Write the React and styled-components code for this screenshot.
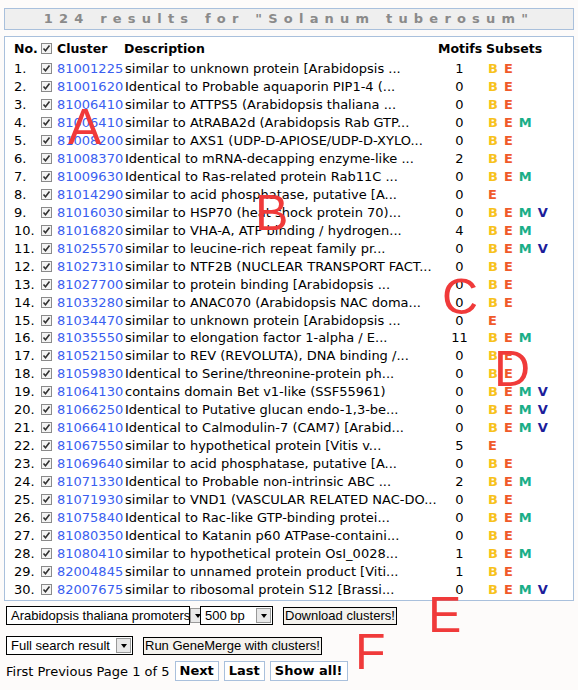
import React from "react";
import styled, { createGlobalStyle } from "styled-components";

const G = createGlobalStyle`
  body { margin: 0; background: #fdfbfa; font-family: "DejaVu Sans", Verdana, sans-serif; font-size: 13px; color: #000; }
`;
const Page = styled.div`position: relative; width: 578px; height: 690px; padding: 8px 4px 0; box-sizing: border-box;`;
const Title = styled.div`
  height: 20px; border: 1px solid #a9c0dc; background: #efefef; color: #8a8a8a;
  font-weight: bold; font-size: 13px; letter-spacing: 6.2px; text-align: center; line-height: 20px; white-space: nowrap;
`;
const Box = styled.div`margin-top: 6px; border: 1px solid #a9c0dc; background: #fff; padding: 3px 0 2px 9px; height: 565px; box-sizing: border-box; overflow: hidden;`;
const Row = styled.div`
  display: grid; grid-template-columns: 27px 16px 67px 314px 48px 1fr; align-items: center; height: 17.95px;
  white-space: nowrap; font-weight: ${p => (p.$head ? "bold" : "normal")}; margin-bottom: ${p => (p.$head ? "2px" : "0")};
  font-size: ${p => (p.$head ? "12.5px" : "13px")};
`;
const Check = styled.span`
  width: 11px; height: 11px; border: 1px solid #8a8a8a; background: #f4f4f4; display: inline-flex; align-items: center; justify-content: center;
  box-sizing: border-box;
`;
const Link = styled.span`color: #3a5ef0; overflow: hidden;`;
const Desc = styled.span`overflow: hidden; padding-left: 1px;`;
const Num = styled.span`text-align: center; padding-right: 5px;`;
const Letters = styled.span`display: flex; gap: 6px; font-weight: bold; padding-left: 2px;`;
const L = styled.span`color: ${p => p.$c};`;
const Controls = styled.div`display: flex; flex-direction: column; gap: 11px; padding: 5px 0 0 2px; font-family: "Liberation Sans", Arial, sans-serif;`;
const CRow = styled.div`display: flex; align-items: center; gap: 10px;`;
const Select = styled.div`
  display: flex; align-items: center; height: 19px; border: 1px solid #000; background: #fff; padding-left: 4px; font-size: 13px; width: ${p => p.$w}px; box-sizing: border-box; justify-content: space-between; white-space: nowrap;
`;
const Arrow = styled.span`flex: none; width: 15px; height: 15px; margin-right: 1px; background: #e8e8e8; border: 1px solid #999; box-sizing: border-box; display: flex; align-items: center; justify-content: center;
  &::after { content: ""; border: 3.5px solid transparent; border-top: 4px solid #000; margin-top: 4px; }`;
const Btn = styled.span`border: 1px solid #000; background: #f4f2ee; font-size: 13px; padding: 0 1px; height: 16px; line-height: 16px; white-space: nowrap;`;
const Pager = styled.div`display: flex; align-items: center; gap: 5px; margin-top: -5px; font-family: "DejaVu Sans", Verdana, sans-serif;`;
const PBtn = styled.span`border: 1px solid #a9c0dc; background: #fff; font-weight: bold; padding: 0 4px; height: 18px; line-height: 18px;`;
const Mark = styled.span`position: absolute; left: ${p => p.$x}px; top: ${p => p.$y}px; color: #f03a3a; font-family: "Liberation Sans", Arial, sans-serif; font-size: 50px; line-height: 1;`;

const C = { B: "#f7c21c", E: "#f05a2a", M: "#1aae88", V: "#1c1c9a" };
const rows = [
["81001225","similar to unknown protein [Arabidopsis ...",1,"BE"],
["81001620","Identical to Probable aquaporin PIP1-4 (...",0,"BE"],
["81006410","similar to ATTPS5 (Arabidopsis thaliana ...",0,"BE"],
["81006410","similar to AtRABA2d (Arabidopsis Rab GTP...",0,"BEM"],
["81008200","similar to AXS1 (UDP-D-APIOSE/UDP-D-XYLO...",0,"BE"],
["81008370","Identical to mRNA-decapping enzyme-like ...",2,"BE"],
["81009630","Identical to Ras-related protein Rab11C ...",0,"BEM"],
["81014290","similar to acid phosphatase, putative [A...",0,"E"],
["81016030","similar to HSP70 (heat shock protein 70)...",0,"BEMV"],
["81016820","similar to VHA-A, ATP binding / hydrogen...",4,"BEM"],
["81025570","similar to leucine-rich repeat family pr...",0,"BEMV"],
["81027310","similar to NTF2B (NUCLEAR TRANSPORT FACT...",0,"BE"],
["81027700","similar to protein binding [Arabidopsis ...",0,"BE"],
["81033280","similar to ANAC070 (Arabidopsis NAC doma...",0,"BE"],
["81034470","similar to unknown protein [Arabidopsis ...",0,"E"],
["81035550","similar to elongation factor 1-alpha / E...",11,"BEM"],
["81052150","similar to REV (REVOLUTA), DNA binding /...",0,"BE"],
["81059830","Identical to Serine/threonine-protein ph...",0,"BE"],
["81064130","contains domain Bet v1-like (SSF55961)",0,"BEMV"],
["81066250","Identical to Putative glucan endo-1,3-be...",0,"BEMV"],
["81066410","Identical to Calmodulin-7 (CAM7) [Arabid...",0,"BEMV"],
["81067550","similar to hypothetical protein [Vitis v...",5,"E"],
["81069640","similar to acid phosphatase, putative [A...",0,"BE"],
["81071330","Identical to Probable non-intrinsic ABC ...",2,"BEM"],
["81071930","similar to VND1 (VASCULAR RELATED NAC-DO...",0,"BE"],
["81075840","Identical to Rac-like GTP-binding protei...",0,"BEM"],
["81080350","Identical to Katanin p60 ATPase-containi...",0,"BE"],
["81080410","similar to hypothetical protein OsI_0028...",1,"BEM"],
["82004845","similar to unnamed protein product [Viti...",1,"BE"],
["82007675","similar to ribosomal protein S12 [Brassi...",0,"BEMV"],
];

const Tick = () => (
  <Check><svg width="9" height="9" viewBox="0 0 9 9"><path d="M1.5 4.5 L3.5 6.8 L7.5 1.5" stroke="#333" strokeWidth="1.6" fill="none" /></svg></Check>
);

export default function App() {
  return (
    <Page>
      <G />
      <Title>124 results for "Solanum tuberosum"</Title>
      <Box>
        <Row $head><span>No.</span><Tick /><span>Cluster</span><span>Description</span><span>Motifs</span><span>Subsets</span></Row>
        {rows.map((r, i) => (
          <Row key={i}>
            <span>{i + 1}.</span><Tick /><Link>{r[0]}</Link><Desc>{r[1]}</Desc><Num>{r[2]}</Num>
            <Letters>{r[3].split("").map(c => <L key={c} $c={C[c]}>{c}</L>)}</Letters>
          </Row>
        ))}
      </Box>
      <Controls>
        <CRow><Select $w={184}>Arabidopsis thaliana promoters<Arrow /></Select><Select $w={73}>500 bp<Arrow /></Select><Btn>Download clusters!</Btn></CRow>
        <CRow><Select $w={127}>Full search result<Arrow /></Select><Btn>Run GeneMerge with clusters!</Btn></CRow>
        <Pager><span>First Previous Page 1 of 5</span><PBtn>Next</PBtn><PBtn>Last</PBtn><PBtn>Show all!</PBtn></Pager>
      </Controls>
      <Mark $x={68} $y={102}>A</Mark>
      <Mark $x={255} $y={188}>B</Mark>
      <Mark $x={442} $y={272}>C</Mark>
      <Mark $x={494} $y={344}>D</Mark>
      <Mark $x={428} $y={590}>E</Mark>
      <Mark $x={355} $y={627}>F</Mark>
    </Page>
  );
}
